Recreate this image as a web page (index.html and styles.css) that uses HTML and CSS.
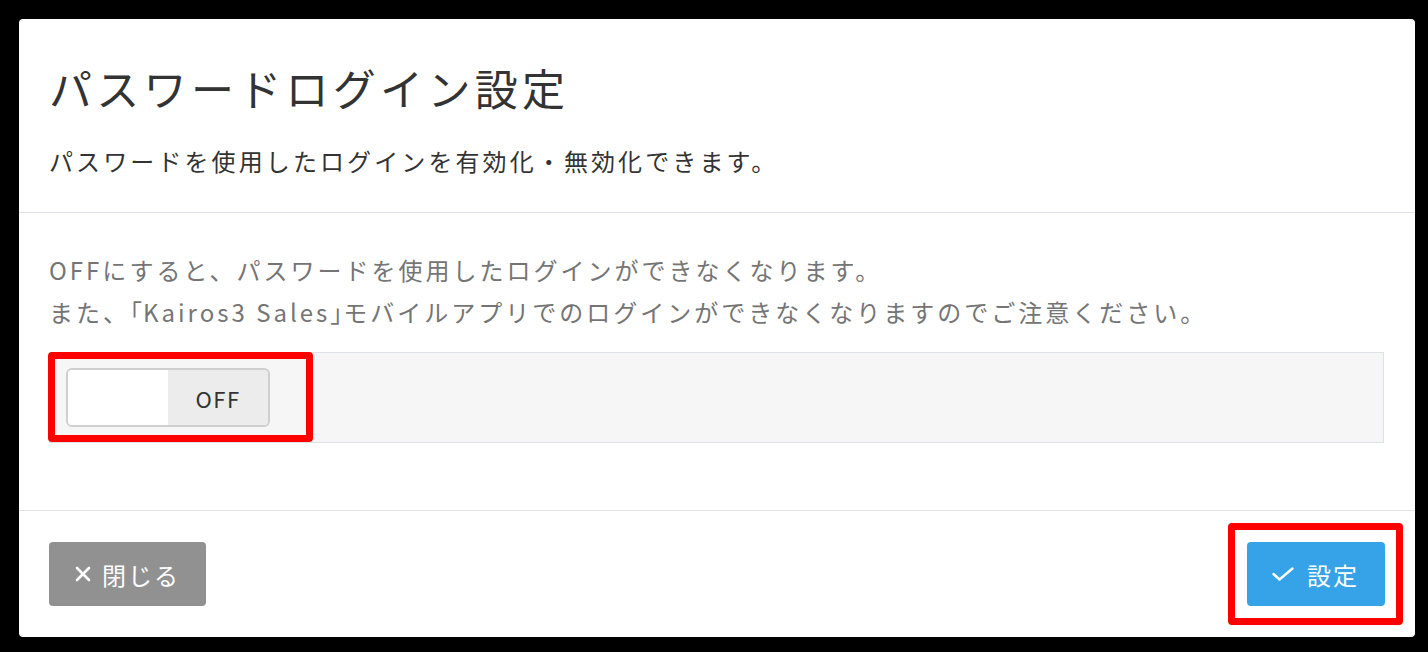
FILE: index.html
```html
<!DOCTYPE html>
<html lang="ja">
<head>
    <meta charset="UTF-8">
    <title>パスワードログイン設定</title>
    <link rel="stylesheet" href="styles.css">
</head>
<body>
    <div class="modal">
        <div class="modal-header">
            <h2>パスワードログイン設定</h2>
            <p class="lead">パスワードを使用したログインを有効化・無効化できます。</p>
        </div>
        <div class="modal-body">
            <p class="note">OFFにすると、パスワードを使用したログインができなくなります。<br>また、<span class="bracket">「</span>Kairos3 Sales<span class="bracket">」</span>モバイルアプリでのログインができなくなりますのでご注意ください。</p>
            <div class="switch-box">
                <div class="switch">
                    <span class="switch-on"></span>
                    <span class="switch-off">OFF</span>
                </div>
                <div class="mark mark-switch"></div>
            </div>
        </div>
        <div class="modal-footer">
            <button class="btn btn-close">
                <svg width="16" height="16" viewBox="0 0 16 16"><path d="M2 2 L14 14 M14 2 L2 14" stroke="#fff" stroke-width="2.6" stroke-linecap="round"/></svg>
                閉じる
            </button>
            <div class="save-wrap">
                <button class="btn btn-save">
                    <svg width="22" height="14" viewBox="0 0 22 14"><path d="M1.5 7 L7.5 12.5 L20.5 1.5" fill="none" stroke="#fff" stroke-width="2.4" stroke-linecap="round" stroke-linejoin="round"/></svg>
                    設定
                </button>
                <div class="mark mark-save"></div>
            </div>
        </div>
    </div>
</body>
</html>
```

FILE: styles.css
```css
body {
    margin: 0;
    background-color: #000;
    font-family: "Noto Sans CJK JP", "Noto Sans", sans-serif;
}
.modal {
    margin: 19px;
    width: 1396px;
    height: 618px;
    background: #fff;
    border-radius: 4px;
    overflow: hidden;
}
.modal-header {
    padding: 38px 30px 31px;
    border-bottom: 1px solid #dee1e5;
}
.modal-header h2 {
    margin: 0;
    font-size: 43px;
    line-height: 60px;
    font-weight: 400;
    letter-spacing: 4.3px;
    color: #333;
}
.lead {
    margin: 24px 0 0;
    font-size: 24px;
    line-height: 40px;
    letter-spacing: 3.1px;
    color: #333;
}
.modal-body {
    padding: 36px 30px 67px;
    border-bottom: 1px solid #dee1e5;
}
.note {
    margin: 0;
    font-size: 24px;
    line-height: 42px;
    letter-spacing: 3px;
    color: #757575;
}
.bracket {
    font-feature-settings: "halt";
    letter-spacing: 1px;
}
.switch-box {
    position: relative;
    margin-top: 19px;
    margin-right: 1px;
    padding: 15px 16px;
    background: #f6f6f6;
    border: 1px solid #dee1e5;
}
.switch {
    display: flex;
    width: 200px;
    height: 55px;
    border: 2px solid #cfcfcf;
    border-radius: 6px;
    overflow: hidden;
}
.switch-on {
    width: 100px;
    background: #fff;
}
.switch-off {
    flex: 1;
    display: flex;
    align-items: center;
    justify-content: center;
    background: #ececec;
    font-size: 22px;
    letter-spacing: 1.5px;
    color: #333;
}
.modal-footer {
    display: flex;
    justify-content: space-between;
    padding: 31px 30px 30px;
}
.btn {
    display: flex;
    align-items: center;
    gap: 10px;
    height: 64px;
    border: none;
    border-radius: 4px;
    color: #fff;
    font-family: inherit;
    font-size: 24px;
    letter-spacing: 2px;
}
.btn-close {
    width: 157px;
    padding: 0 0 0 26px;
    gap: 11px;
    background: #919191;
}
.save-wrap {
    position: relative;
}
.btn-save {
    width: 138px;
    padding: 0 0 0 25px;
    gap: 13px;
    background: #36a3e9;
}
.mark {
    position: absolute;
    border: 7px solid #ff0000;
    border-radius: 4px;
    box-sizing: border-box;
}
.mark-switch {
    left: -2px;
    top: -1px;
    width: 265px;
    height: 90px;
}
.mark-save {
    left: -19px;
    top: -19px;
    width: 175px;
    height: 102px;
}
```
